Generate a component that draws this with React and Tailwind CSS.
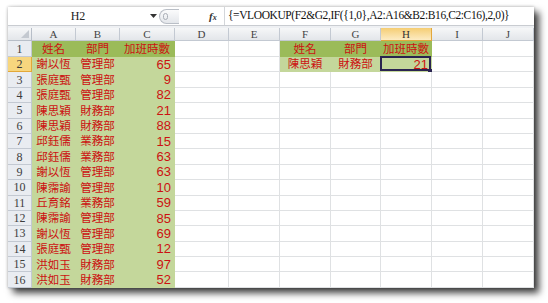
import React from 'react';

const serif = { fontFamily: '"Liberation Serif", "Times New Roman", serif' };
const cjk = { fontFamily: '"Noto Sans CJK TC", "Noto Sans CJK SC", sans-serif' };
const num = { fontFamily: '"Liberation Sans", Arial, sans-serif' };

const columns = [
  { key: 'A', w: 'w-[44px]' },
  { key: 'B', w: 'w-[44px]' },
  { key: 'C', w: 'w-[55px]' },
  { key: 'D', w: 'w-[54px]' },
  { key: 'E', w: 'w-[51px]' },
  { key: 'F', w: 'w-[51px]' },
  { key: 'G', w: 'w-[50px]' },
  { key: 'H', w: 'w-[51px]' },
  { key: 'I', w: 'w-[51px]' },
  { key: 'J', w: 'w-[51px]' },
];

const records = [
  ['謝以恆', '管理部', 65],
  ['張庭甄', '管理部', 9],
  ['張庭甄', '管理部', 82],
  ['陳思穎', '財務部', 21],
  ['陳思穎', '財務部', 88],
  ['邱鈺儒', '業務部', 15],
  ['邱鈺儒', '業務部', 63],
  ['謝以恆', '管理部', 63],
  ['陳霈諭', '管理部', 10],
  ['丘育銘', '業務部', 59],
  ['陳霈諭', '管理部', 85],
  ['謝以恆', '管理部', 69],
  ['張庭甄', '管理部', 12],
  ['洪如玉', '財務部', 97],
  ['洪如玉', '財務部', 52],
];

// builds the cell map for one sheet row
function rowCells(r) {
  const cells = {};
  if (r === 1) {
    cells.A = { t: '姓名', fill: 'dark' };
    cells.B = { t: '部門', fill: 'dark' };
    cells.C = { t: '加班時數', fill: 'dark' };
    cells.F = { t: '姓名', fill: 'dark' };
    cells.G = { t: '部門', fill: 'dark' };
    cells.H = { t: '加班時數', fill: 'dark' };
  } else {
    const rec = records[r - 2];
    cells.A = { t: rec[0], fill: 'light' };
    cells.B = { t: rec[1], fill: 'light' };
    cells.C = { n: rec[2], fill: 'light' };
    if (r === 2) {
      cells.F = { t: '陳思穎', fill: 'light' };
      cells.G = { t: '財務部', fill: 'light' };
      cells.H = { n: 21, fill: 'light', selected: true };
    }
  }
  return cells;
}

function Cell({ col, cell }) {
  let cls = 'border-r border-b border-[#dfe1e3] bg-white';
  if (cell?.fill === 'dark') cls = 'border-r border-b border-[#9bbb59] bg-[#9bbb59]';
  if (cell?.fill === 'light') cls = 'border-r border-b border-[#c4d79b] bg-[#c4d79b]';
  return (
    <div className={`relative h-full shrink-0 ${col.w} ${cls} flex items-center`}>
      {cell?.t && (
        <span className="w-full text-center text-[11.5px] leading-none text-[#cc1111]" style={cjk}>
          {cell.t}
        </span>
      )}
      {cell?.n !== undefined && (
        <span className="w-full pr-[3px] text-right text-[13px] leading-none text-[#cc1111]" style={num}>
          {cell.n}
        </span>
      )}
      {cell?.selected && (
        <>
          <div className="absolute -left-[1px] -top-[1px] right-0 bottom-0 border-2 border-[#2a2450]" />
          <div className="absolute -right-[2px] -bottom-[3px] h-[5px] w-[5px] bg-[#2a2450]" />
        </>
      )}
    </div>
  );
}

function SheetRow({ r }) {
  const cells = rowCells(r);
  const active = r === 2;
  return (
    <div className={`flex ${r === 1 ? 'h-[16px]' : 'h-[15.4px]'}`}>
      <div
        className={`w-[24px] shrink-0 h-full flex items-center justify-center border-r border-b text-[12px] leading-none ${
          active
            ? 'bg-[#f7d67e] border-[#e3a838] text-[#3a3a3a]'
            : 'bg-[#e9ecf1] border-[#c3c9d2] text-[#3d3d3d]'
        }`}
        style={serif}
      >
        {r}
      </div>
      {columns.map((c) => (
        <Cell key={c.key} col={c} cell={cells[c.key]} />
      ))}
    </div>
  );
}

export default function App() {
  const rows = Array.from({ length: 16 }, (_, i) => i + 1);
  return (
    <div className="w-[548px] h-[303px] bg-white pl-[8px] pt-[7px] overflow-hidden">
      <div className="w-[526px] h-[281px] bg-white flex flex-col overflow-hidden shadow-[5px_5px_7px_rgba(0,0,0,0.75),0_0_3px_rgba(0,0,0,0.3)]">
        {/* Formula bar */}
        <div className="h-[19px] shrink-0 flex items-center border-b border-[#c9ccd1] bg-white">
          <div className="w-[140px] text-center text-[12px] text-[#222]" style={serif}>
            H2
          </div>
          <div className="w-[10px] flex justify-center">
            <svg width="7" height="4" viewBox="0 0 7 4">
              <path d="M0 0h7L3.5 4z" fill="#333" />
            </svg>
          </div>
          <div className="ml-[1px] h-[15px] w-[20px] rounded-l-full border border-r-0 border-[#b9bec6] bg-gradient-to-b from-[#fbfbfc] to-[#e4e7eb] flex items-center pl-[3px]">
            <div className="h-[7px] w-[5px] rounded-full border border-[#a9aeb6]" />
          </div>
          <div className="w-[30px]" />
          <div className="w-[15px] text-[11px] italic font-bold text-[#333] leading-none" style={serif}>
            f<span className="text-[8px]">x</span>
          </div>
          <div
            className="flex-1 h-full border-l border-[#d3d6da] pl-[3px] flex items-center text-[11.5px] tracking-[-0.4px] text-[#111] whitespace-nowrap"
            style={serif}
          >
            {'{=VLOOKUP(F2&G2,IF({1,0},A2:A16&B2:B16,C2:C16),2,0)}'}
          </div>
        </div>
        <div className="h-[2px] shrink-0 bg-[#eef0f3]" />

        {/* Column headers */}
        <div className="h-[13px] shrink-0 flex">
          <div className="w-[24px] h-full border-r border-b border-[#b7bec8] bg-gradient-to-b from-[#f6f7f8] to-[#e3e6ea] flex items-end justify-end p-[2px]">
            <svg width="8" height="8" viewBox="0 0 8 8">
              <path d="M8 0V8H0z" fill="#c4c9d0" />
            </svg>
          </div>
          {columns.map((c) => (
            <div
              key={c.key}
              className={`${c.w} shrink-0 h-full border-r border-b flex items-center justify-center text-[11px] leading-none ${
                c.key === 'H'
                  ? 'bg-gradient-to-b from-[#f5cd72] to-[#fcebc2] border-[#e2a73c] text-[#333]'
                  : 'bg-gradient-to-b from-[#f6f7f8] to-[#e3e6ea] border-[#c3c9d2] text-[#444]'
              }`}
              style={serif}
            >
              {c.key}
            </div>
          ))}
        </div>

        {/* Rows */}
        {rows.map((r) => (
          <SheetRow key={r} r={r} />
        ))}
      </div>
    </div>
  );
}
